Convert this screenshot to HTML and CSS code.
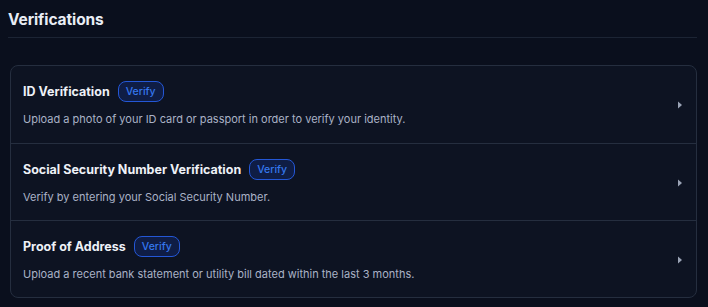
FILE: index.html
```html
<!DOCTYPE html>
<html>
<head>
<meta charset="utf-8">
<link rel="stylesheet" href="styles.css">
</head>
<body>
<div class="page">
  <h1 class="title">Verifications</h1>
  <div class="divider"></div>
  <div class="card">
    <div class="row">
      <div class="content">
        <div class="head"><span class="name">ID Verification</span><span class="badge">Verify</span></div>
        <div class="desc">Upload a photo of your ID card or passport in order to verify your identity.</div>
      </div>
      <svg class="chev" width="6" height="8" viewBox="0 0 6 8"><path d="M1 0.5 L5 4 L1 7.5 Z" fill="#9aa3b5"/></svg>
    </div>
    <div class="row">
      <div class="content">
        <div class="head"><span class="name">Social Security Number Verification</span><span class="badge">Verify</span></div>
        <div class="desc">Verify by entering your Social Security Number.</div>
      </div>
      <svg class="chev" width="6" height="8" viewBox="0 0 6 8"><path d="M1 0.5 L5 4 L1 7.5 Z" fill="#9aa3b5"/></svg>
    </div>
    <div class="row">
      <div class="content">
        <div class="head"><span class="name">Proof of Address</span><span class="badge">Verify</span></div>
        <div class="desc">Upload a recent bank statement or utility bill dated within the last 3 months.</div>
      </div>
      <svg class="chev" width="6" height="8" viewBox="0 0 6 8"><path d="M1 0.5 L5 4 L1 7.5 Z" fill="#9aa3b5"/></svg>
    </div>
  </div>
</div>
</body>
</html>
```
FILE: styles.css
```css
html, body {
  margin: 0;
  padding: 0;
  background: #0a0f1d;
  font-family: Inter, "Noto Sans", sans-serif;
}
.page {
  width: 689px;
  padding: 9px 0 0 8px;
}
.title {
  margin: 0;
  font-size: 15.5px;
  font-weight: 700;
  color: #e9edf5;
  line-height: 22px;
  letter-spacing: -0.1px;
}
.divider {
  height: 1px;
  background: #1c2434;
  margin-top: 6px;
}
.card {
  margin: 27px 0 0 2px;
  border: 1px solid #252e3f;
  border-radius: 8px;
  background: #0d1322;
}
.row {
  height: 77px;
  box-sizing: border-box;
  display: flex;
  align-items: flex-start;
  padding: 15px 13px 0 12px;
  border-top: 1px solid #252e3f;
}
.row:first-child {
  height: 77px;
  border-top: none;
}
.content {
  flex: 1;
  display: flex;
  flex-direction: column;
  gap: 10px;
}
.head {
  display: flex;
  align-items: center;
  gap: 8px;
}
.name {
  font-size: 12.5px;
  font-weight: 700;
  color: #eef1f7;
}
.badge {
  font-size: 10.5px;
  font-weight: 500;
  color: #3577ee;
  background: #0f1d45;
  border: 1.5px solid #2457d6;
  border-radius: 8px;
  padding: 3px 7px;
  line-height: 13px;
}
.desc {
  font-size: 11px;
  line-height: 14px;
  color: #aab2c6;
}
.chev {
  align-self: center;
  margin-top: -14px;
}
```
